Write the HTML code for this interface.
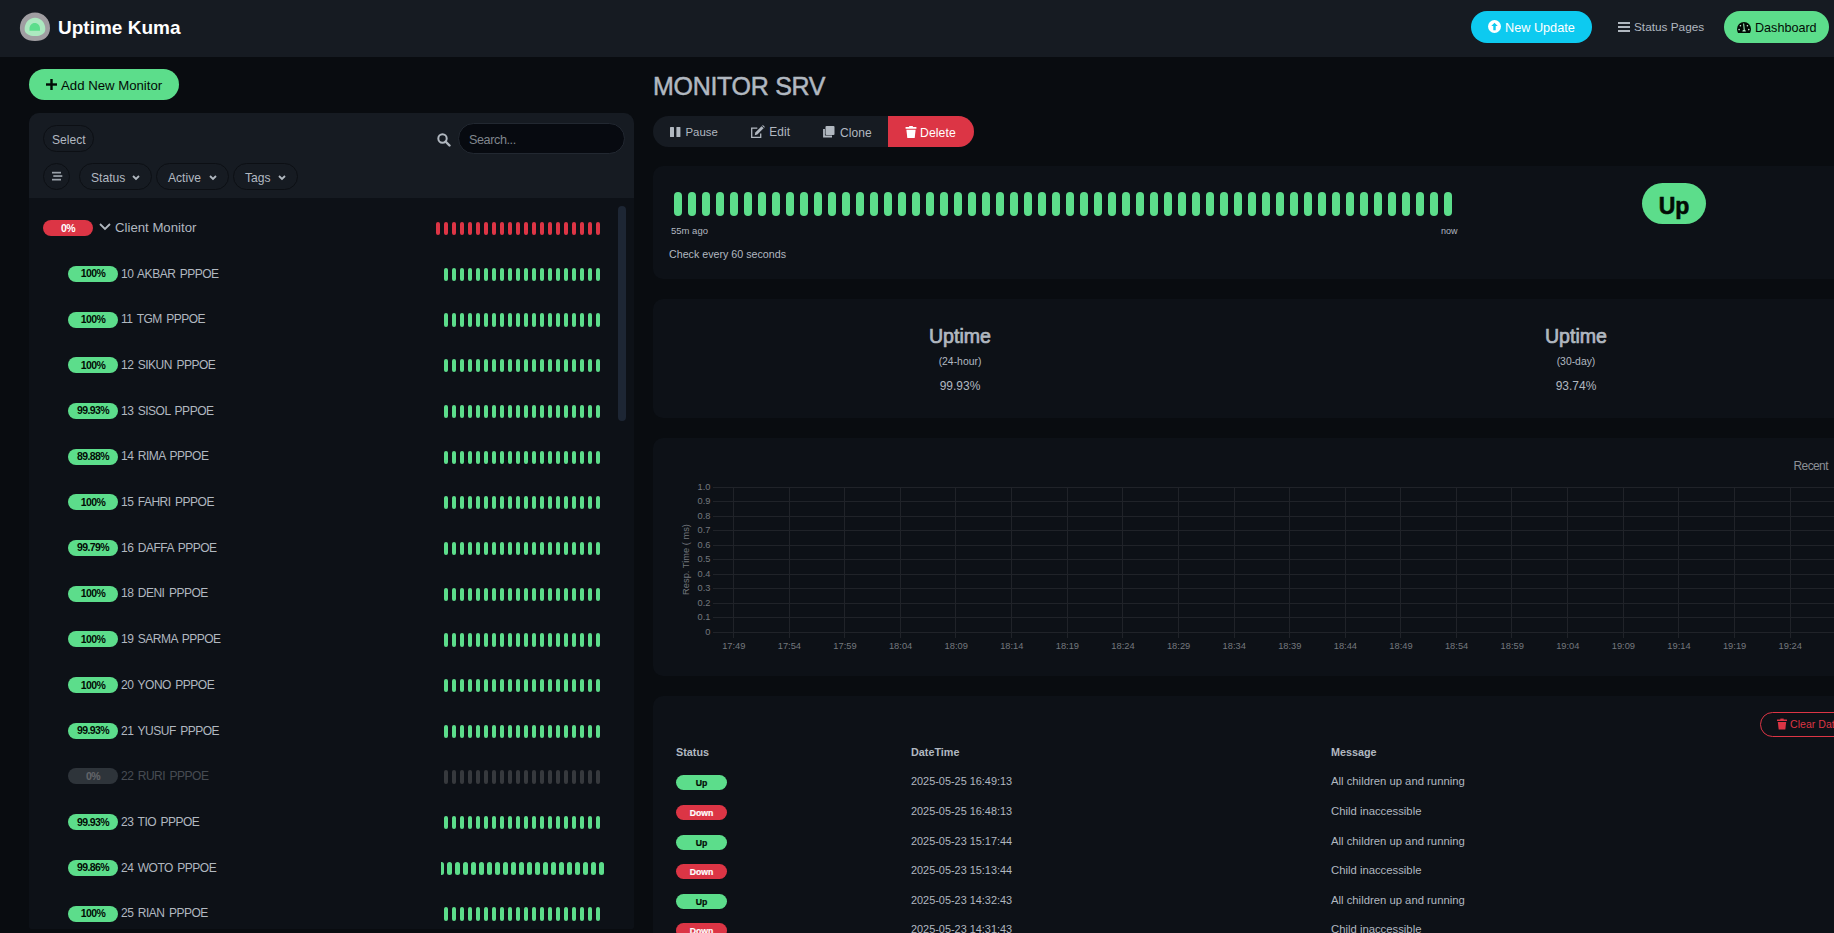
<!DOCTYPE html><html><head><meta charset="utf-8"><title>Uptime Kuma</title><style>
*{box-sizing:border-box}
html,body{margin:0;padding:0}
body{width:1834px;height:933px;overflow:hidden;position:relative;background:#090c10;font-family:"Liberation Sans",sans-serif;color:#b1b8c0}
.a{position:absolute}
.hdr{left:0;top:0;width:1834px;height:57px;background:#161b22}
.t{position:absolute;white-space:nowrap;line-height:1}
.bt i{position:absolute;border-radius:5px;display:block}
.pill{position:absolute;border-radius:999px}
</style></head><body>
<div class="a hdr"></div>
<svg class="a" style="left:15px;top:8px" width="40" height="38" viewBox="0 0 40 38"><path d="M20 4.5C28.5 4.5 35 11 35 20C35 28.5 29 33 20 33C11 33 4.9 28.5 4.9 20C4.9 11 11.5 4.5 20 4.5Z" fill="#a09ea2"/><path d="M20 9.8C26 9.8 30.3 15 30.3 21C30.3 25.8 26 28.1 20 28.1C14 28.1 9.6 25.8 9.6 21C9.6 15 14 9.8 20 9.8Z" fill="#ace9c0"/><path d="M19.75 14.9C23 14.9 25 17.5 25 20.5L25 22.8L14.5 22.8L14.5 20.5C14.5 17.5 16.5 14.9 19.75 14.9Z" fill="#5cdd8b"/></svg>
<div class="t" style="left:58px;top:18.2px;font-size:19px;font-weight:bold;color:#fff">Uptime Kuma</div>
<div class="pill" style="left:1471px;top:11px;width:121px;height:32px;background:#0dcaf0"></div>
<svg class="a" style="left:1488px;top:20px" width="13" height="13" viewBox="0 0 16 16"><circle cx="8" cy="8" r="8" fill="#fff"/><path d="M8 3.5L4 7.5H6.5V12.5H9.5V7.5H12Z" fill="#0dcaf0"/></svg>
<div class="t" style="left:1505px;top:22px;font-size:12.7px;color:#fff">New Update</div>
<svg class="a" style="left:1618px;top:21px" width="12" height="12" viewBox="0 0 12 12"><rect x="0" y="1" width="12" height="2" fill="#b1b8c0"/><rect x="0" y="5" width="12" height="2" fill="#b1b8c0"/><rect x="0" y="9" width="12" height="2" fill="#b1b8c0"/></svg>
<div class="t" style="left:1634px;top:22px;font-size:11.8px;color:#b1b8c0">Status Pages</div>
<div class="pill" style="left:1724px;top:11px;width:105px;height:32px;background:#5cdd8b"></div>
<svg class="a" style="left:1737px;top:22px" width="14" height="11" viewBox="0 0 14 11"><path d="M7 0A7 7 0 0 1 14 7Q14 9.5 13 11H1Q0 9.5 0 7A7 7 0 0 1 7 0Z" fill="#020b05"/><circle cx="3.4" cy="3.8" r="0.8" fill="#cfeedd"/><circle cx="10.4" cy="3.8" r="0.8" fill="#cfeedd"/><circle cx="2.1" cy="7.6" r="0.8" fill="#cfeedd"/><circle cx="11.8" cy="7.6" r="0.8" fill="#cfeedd"/><path d="M6.6 1.5L7.3 8" stroke="#8fe3b0" stroke-width="1.1"/><path d="M5.3 9.5A1.8 1.8 0 0 1 8.9 9.5Z" fill="#b0ecc8"/></svg>
<div class="t" style="left:1755px;top:21.5px;font-size:12.6px;color:#020b05">Dashboard</div>
<div class="pill" style="left:29px;top:69px;width:150px;height:31px;background:#5cdd8b"></div>
<svg class="a" style="left:46px;top:79px" width="11" height="11" viewBox="0 0 11 11"><rect x="4.3" y="0" width="2.4" height="11" fill="#020b05"/><rect x="0" y="4.3" width="11" height="2.4" fill="#020b05"/></svg>
<div class="t" style="left:61px;top:79px;font-size:13.2px;color:#020b05">Add New Monitor</div>
<div class="a" style="left:29px;top:113px;width:605px;height:816px;background:#0d1117;border-radius:10px 10px 2px 2px"></div>
<div class="a" style="left:29px;top:113px;width:605px;height:85px;background:#161b22;border-radius:10px 10px 0 0"></div>
<div class="pill" style="left:43px;top:125px;width:51px;height:27px;border:1.5px solid #0c0f14;background:#161b22"></div>
<div class="t" style="left:52px;top:133.5px;font-size:12.1px;color:#b1b8c0">Select</div>
<svg class="a" style="left:437px;top:133px" width="14" height="14" viewBox="0 0 14 14"><circle cx="5.5" cy="5.5" r="4.2" fill="none" stroke="#b1b8c0" stroke-width="2"/><path d="M8.5 8.5L12.5 12.5" stroke="#b1b8c0" stroke-width="2.4" stroke-linecap="round"/></svg>
<div class="pill" style="left:457.5px;top:123px;width:167.5px;height:31px;background:#070a10;border:1px solid #222831"></div>
<div class="t" style="left:469px;top:134.2px;font-size:12.6px;letter-spacing:-0.4px;color:#80868d">Search...</div>
<div class="pill" style="left:43px;top:163px;width:27px;height:27px;border:1.5px solid #0c0f14"></div>
<svg class="a" style="left:52px;top:171px" width="11" height="11" viewBox="0 0 11 11"><rect x="0" y="0.8" width="9" height="1.7" fill="#9aa1a9"/><rect x="1.3" y="4.2" width="9" height="1.7" fill="#9aa1a9"/><rect x="0" y="7.8" width="9" height="1.7" fill="#9aa1a9"/></svg>
<div class="pill" style="left:79px;top:163px;width:73px;height:27px;border:1.5px solid #0c0f14"></div>
<div class="t" style="left:91px;top:172px;font-size:12.1px;color:#b1b8c0">Status</div>
<svg class="a" style="left:132px;top:174.7px" width="8" height="6" viewBox="0 0 8 6"><path d="M1 1L4 4L7 1" fill="none" stroke="#b1b8c0" stroke-width="1.8"/></svg>
<div class="pill" style="left:156px;top:163px;width:73px;height:27px;border:1.5px solid #0c0f14"></div>
<div class="t" style="left:168px;top:172px;font-size:12.1px;color:#b1b8c0">Active</div>
<svg class="a" style="left:209px;top:174.7px" width="8" height="6" viewBox="0 0 8 6"><path d="M1 1L4 4L7 1" fill="none" stroke="#b1b8c0" stroke-width="1.8"/></svg>
<div class="pill" style="left:233px;top:163px;width:65px;height:27px;border:1.5px solid #0c0f14"></div>
<div class="t" style="left:245px;top:172px;font-size:12.1px;color:#b1b8c0">Tags</div>
<svg class="a" style="left:278px;top:174.7px" width="8" height="6" viewBox="0 0 8 6"><path d="M1 1L4 4L7 1" fill="none" stroke="#b1b8c0" stroke-width="1.8"/></svg>
<div class="a" style="left:618px;top:206px;width:8px;height:215px;background:#1d2634;border-radius:4px"></div>
<div class="pill" style="left:43px;top:220px;width:50px;height:16px;background:#dc3545"></div>
<div class="t" style="left:43px;top:223.2px;width:50px;text-align:center;font-size:10.5px;letter-spacing:-0.6px;font-weight:bold;color:#fff">0%</div>
<svg class="a" style="left:99px;top:223px" width="12" height="8" viewBox="0 0 12 8"><path d="M1 1L6 6L11 1" fill="none" stroke="#b1b8c0" stroke-width="1.8"/></svg>
<div class="t" style="left:115px;top:221px;font-size:13.2px;color:#b1b8c0">Client Monitor</div>
<div class="bt"><i style="left:435.90px;top:221.85px;width:4.6px;height:13.3px;background:#dc3545"></i><i style="left:443.90px;top:221.85px;width:4.6px;height:13.3px;background:#dc3545"></i><i style="left:451.90px;top:221.85px;width:4.6px;height:13.3px;background:#dc3545"></i><i style="left:459.90px;top:221.85px;width:4.6px;height:13.3px;background:#dc3545"></i><i style="left:467.90px;top:221.85px;width:4.6px;height:13.3px;background:#dc3545"></i><i style="left:475.90px;top:221.85px;width:4.6px;height:13.3px;background:#dc3545"></i><i style="left:483.90px;top:221.85px;width:4.6px;height:13.3px;background:#dc3545"></i><i style="left:491.90px;top:221.85px;width:4.6px;height:13.3px;background:#dc3545"></i><i style="left:499.90px;top:221.85px;width:4.6px;height:13.3px;background:#dc3545"></i><i style="left:507.90px;top:221.85px;width:4.6px;height:13.3px;background:#dc3545"></i><i style="left:515.90px;top:221.85px;width:4.6px;height:13.3px;background:#dc3545"></i><i style="left:523.90px;top:221.85px;width:4.6px;height:13.3px;background:#dc3545"></i><i style="left:531.90px;top:221.85px;width:4.6px;height:13.3px;background:#dc3545"></i><i style="left:539.90px;top:221.85px;width:4.6px;height:13.3px;background:#dc3545"></i><i style="left:547.90px;top:221.85px;width:4.6px;height:13.3px;background:#dc3545"></i><i style="left:555.90px;top:221.85px;width:4.6px;height:13.3px;background:#dc3545"></i><i style="left:563.90px;top:221.85px;width:4.6px;height:13.3px;background:#dc3545"></i><i style="left:571.90px;top:221.85px;width:4.6px;height:13.3px;background:#dc3545"></i><i style="left:579.90px;top:221.85px;width:4.6px;height:13.3px;background:#dc3545"></i><i style="left:587.90px;top:221.85px;width:4.6px;height:13.3px;background:#dc3545"></i><i style="left:595.90px;top:221.85px;width:4.6px;height:13.3px;background:#dc3545"></i></div>
<div>
<div class="pill" style="left:68px;top:265.90px;width:50px;height:16px;background:#5cdd8b"></div>
<div class="t" style="left:68px;top:268.30px;width:50px;text-align:center;font-size:10.5px;letter-spacing:-0.6px;font-weight:bold;color:#020b05">100%</div>
<div class="t" style="left:121px;top:267.60px;font-size:12px;letter-spacing:-0.5px;word-spacing:1.6px;color:#b1b8c0">10 AKBAR PPPOE</div>
<div class="bt"><i style="left:443.90px;top:267.75px;width:4.6px;height:13.3px;background:#5cdd8b"></i><i style="left:451.90px;top:267.75px;width:4.6px;height:13.3px;background:#5cdd8b"></i><i style="left:459.90px;top:267.75px;width:4.6px;height:13.3px;background:#5cdd8b"></i><i style="left:467.90px;top:267.75px;width:4.6px;height:13.3px;background:#5cdd8b"></i><i style="left:475.90px;top:267.75px;width:4.6px;height:13.3px;background:#5cdd8b"></i><i style="left:483.90px;top:267.75px;width:4.6px;height:13.3px;background:#5cdd8b"></i><i style="left:491.90px;top:267.75px;width:4.6px;height:13.3px;background:#5cdd8b"></i><i style="left:499.90px;top:267.75px;width:4.6px;height:13.3px;background:#5cdd8b"></i><i style="left:507.90px;top:267.75px;width:4.6px;height:13.3px;background:#5cdd8b"></i><i style="left:515.90px;top:267.75px;width:4.6px;height:13.3px;background:#5cdd8b"></i><i style="left:523.90px;top:267.75px;width:4.6px;height:13.3px;background:#5cdd8b"></i><i style="left:531.90px;top:267.75px;width:4.6px;height:13.3px;background:#5cdd8b"></i><i style="left:539.90px;top:267.75px;width:4.6px;height:13.3px;background:#5cdd8b"></i><i style="left:547.90px;top:267.75px;width:4.6px;height:13.3px;background:#5cdd8b"></i><i style="left:555.90px;top:267.75px;width:4.6px;height:13.3px;background:#5cdd8b"></i><i style="left:563.90px;top:267.75px;width:4.6px;height:13.3px;background:#5cdd8b"></i><i style="left:571.90px;top:267.75px;width:4.6px;height:13.3px;background:#5cdd8b"></i><i style="left:579.90px;top:267.75px;width:4.6px;height:13.3px;background:#5cdd8b"></i><i style="left:587.90px;top:267.75px;width:4.6px;height:13.3px;background:#5cdd8b"></i><i style="left:595.90px;top:267.75px;width:4.6px;height:13.3px;background:#5cdd8b"></i></div>
</div>
<div>
<div class="pill" style="left:68px;top:311.59px;width:50px;height:16px;background:#5cdd8b"></div>
<div class="t" style="left:68px;top:313.99px;width:50px;text-align:center;font-size:10.5px;letter-spacing:-0.6px;font-weight:bold;color:#020b05">100%</div>
<div class="t" style="left:121px;top:313.29px;font-size:12px;letter-spacing:-0.5px;word-spacing:1.6px;color:#b1b8c0">11 TGM PPPOE</div>
<div class="bt"><i style="left:443.90px;top:313.44px;width:4.6px;height:13.3px;background:#5cdd8b"></i><i style="left:451.90px;top:313.44px;width:4.6px;height:13.3px;background:#5cdd8b"></i><i style="left:459.90px;top:313.44px;width:4.6px;height:13.3px;background:#5cdd8b"></i><i style="left:467.90px;top:313.44px;width:4.6px;height:13.3px;background:#5cdd8b"></i><i style="left:475.90px;top:313.44px;width:4.6px;height:13.3px;background:#5cdd8b"></i><i style="left:483.90px;top:313.44px;width:4.6px;height:13.3px;background:#5cdd8b"></i><i style="left:491.90px;top:313.44px;width:4.6px;height:13.3px;background:#5cdd8b"></i><i style="left:499.90px;top:313.44px;width:4.6px;height:13.3px;background:#5cdd8b"></i><i style="left:507.90px;top:313.44px;width:4.6px;height:13.3px;background:#5cdd8b"></i><i style="left:515.90px;top:313.44px;width:4.6px;height:13.3px;background:#5cdd8b"></i><i style="left:523.90px;top:313.44px;width:4.6px;height:13.3px;background:#5cdd8b"></i><i style="left:531.90px;top:313.44px;width:4.6px;height:13.3px;background:#5cdd8b"></i><i style="left:539.90px;top:313.44px;width:4.6px;height:13.3px;background:#5cdd8b"></i><i style="left:547.90px;top:313.44px;width:4.6px;height:13.3px;background:#5cdd8b"></i><i style="left:555.90px;top:313.44px;width:4.6px;height:13.3px;background:#5cdd8b"></i><i style="left:563.90px;top:313.44px;width:4.6px;height:13.3px;background:#5cdd8b"></i><i style="left:571.90px;top:313.44px;width:4.6px;height:13.3px;background:#5cdd8b"></i><i style="left:579.90px;top:313.44px;width:4.6px;height:13.3px;background:#5cdd8b"></i><i style="left:587.90px;top:313.44px;width:4.6px;height:13.3px;background:#5cdd8b"></i><i style="left:595.90px;top:313.44px;width:4.6px;height:13.3px;background:#5cdd8b"></i></div>
</div>
<div>
<div class="pill" style="left:68px;top:357.28px;width:50px;height:16px;background:#5cdd8b"></div>
<div class="t" style="left:68px;top:359.68px;width:50px;text-align:center;font-size:10.5px;letter-spacing:-0.6px;font-weight:bold;color:#020b05">100%</div>
<div class="t" style="left:121px;top:358.98px;font-size:12px;letter-spacing:-0.5px;word-spacing:1.6px;color:#b1b8c0">12 SIKUN PPPOE</div>
<div class="bt"><i style="left:443.90px;top:359.13px;width:4.6px;height:13.3px;background:#5cdd8b"></i><i style="left:451.90px;top:359.13px;width:4.6px;height:13.3px;background:#5cdd8b"></i><i style="left:459.90px;top:359.13px;width:4.6px;height:13.3px;background:#5cdd8b"></i><i style="left:467.90px;top:359.13px;width:4.6px;height:13.3px;background:#5cdd8b"></i><i style="left:475.90px;top:359.13px;width:4.6px;height:13.3px;background:#5cdd8b"></i><i style="left:483.90px;top:359.13px;width:4.6px;height:13.3px;background:#5cdd8b"></i><i style="left:491.90px;top:359.13px;width:4.6px;height:13.3px;background:#5cdd8b"></i><i style="left:499.90px;top:359.13px;width:4.6px;height:13.3px;background:#5cdd8b"></i><i style="left:507.90px;top:359.13px;width:4.6px;height:13.3px;background:#5cdd8b"></i><i style="left:515.90px;top:359.13px;width:4.6px;height:13.3px;background:#5cdd8b"></i><i style="left:523.90px;top:359.13px;width:4.6px;height:13.3px;background:#5cdd8b"></i><i style="left:531.90px;top:359.13px;width:4.6px;height:13.3px;background:#5cdd8b"></i><i style="left:539.90px;top:359.13px;width:4.6px;height:13.3px;background:#5cdd8b"></i><i style="left:547.90px;top:359.13px;width:4.6px;height:13.3px;background:#5cdd8b"></i><i style="left:555.90px;top:359.13px;width:4.6px;height:13.3px;background:#5cdd8b"></i><i style="left:563.90px;top:359.13px;width:4.6px;height:13.3px;background:#5cdd8b"></i><i style="left:571.90px;top:359.13px;width:4.6px;height:13.3px;background:#5cdd8b"></i><i style="left:579.90px;top:359.13px;width:4.6px;height:13.3px;background:#5cdd8b"></i><i style="left:587.90px;top:359.13px;width:4.6px;height:13.3px;background:#5cdd8b"></i><i style="left:595.90px;top:359.13px;width:4.6px;height:13.3px;background:#5cdd8b"></i></div>
</div>
<div>
<div class="pill" style="left:68px;top:402.97px;width:50px;height:16px;background:#5cdd8b"></div>
<div class="t" style="left:68px;top:405.37px;width:50px;text-align:center;font-size:10.5px;letter-spacing:-0.6px;font-weight:bold;color:#020b05">99.93%</div>
<div class="t" style="left:121px;top:404.67px;font-size:12px;letter-spacing:-0.5px;word-spacing:1.6px;color:#b1b8c0">13 SISOL PPPOE</div>
<div class="bt"><i style="left:443.90px;top:404.82px;width:4.6px;height:13.3px;background:#5cdd8b"></i><i style="left:451.90px;top:404.82px;width:4.6px;height:13.3px;background:#5cdd8b"></i><i style="left:459.90px;top:404.82px;width:4.6px;height:13.3px;background:#5cdd8b"></i><i style="left:467.90px;top:404.82px;width:4.6px;height:13.3px;background:#5cdd8b"></i><i style="left:475.90px;top:404.82px;width:4.6px;height:13.3px;background:#5cdd8b"></i><i style="left:483.90px;top:404.82px;width:4.6px;height:13.3px;background:#5cdd8b"></i><i style="left:491.90px;top:404.82px;width:4.6px;height:13.3px;background:#5cdd8b"></i><i style="left:499.90px;top:404.82px;width:4.6px;height:13.3px;background:#5cdd8b"></i><i style="left:507.90px;top:404.82px;width:4.6px;height:13.3px;background:#5cdd8b"></i><i style="left:515.90px;top:404.82px;width:4.6px;height:13.3px;background:#5cdd8b"></i><i style="left:523.90px;top:404.82px;width:4.6px;height:13.3px;background:#5cdd8b"></i><i style="left:531.90px;top:404.82px;width:4.6px;height:13.3px;background:#5cdd8b"></i><i style="left:539.90px;top:404.82px;width:4.6px;height:13.3px;background:#5cdd8b"></i><i style="left:547.90px;top:404.82px;width:4.6px;height:13.3px;background:#5cdd8b"></i><i style="left:555.90px;top:404.82px;width:4.6px;height:13.3px;background:#5cdd8b"></i><i style="left:563.90px;top:404.82px;width:4.6px;height:13.3px;background:#5cdd8b"></i><i style="left:571.90px;top:404.82px;width:4.6px;height:13.3px;background:#5cdd8b"></i><i style="left:579.90px;top:404.82px;width:4.6px;height:13.3px;background:#5cdd8b"></i><i style="left:587.90px;top:404.82px;width:4.6px;height:13.3px;background:#5cdd8b"></i><i style="left:595.90px;top:404.82px;width:4.6px;height:13.3px;background:#5cdd8b"></i></div>
</div>
<div>
<div class="pill" style="left:68px;top:448.66px;width:50px;height:16px;background:#5cdd8b"></div>
<div class="t" style="left:68px;top:451.06px;width:50px;text-align:center;font-size:10.5px;letter-spacing:-0.6px;font-weight:bold;color:#020b05">89.88%</div>
<div class="t" style="left:121px;top:450.36px;font-size:12px;letter-spacing:-0.5px;word-spacing:1.6px;color:#b1b8c0">14 RIMA PPPOE</div>
<div class="bt"><i style="left:443.90px;top:450.51px;width:4.6px;height:13.3px;background:#5cdd8b"></i><i style="left:451.90px;top:450.51px;width:4.6px;height:13.3px;background:#5cdd8b"></i><i style="left:459.90px;top:450.51px;width:4.6px;height:13.3px;background:#5cdd8b"></i><i style="left:467.90px;top:450.51px;width:4.6px;height:13.3px;background:#5cdd8b"></i><i style="left:475.90px;top:450.51px;width:4.6px;height:13.3px;background:#5cdd8b"></i><i style="left:483.90px;top:450.51px;width:4.6px;height:13.3px;background:#5cdd8b"></i><i style="left:491.90px;top:450.51px;width:4.6px;height:13.3px;background:#5cdd8b"></i><i style="left:499.90px;top:450.51px;width:4.6px;height:13.3px;background:#5cdd8b"></i><i style="left:507.90px;top:450.51px;width:4.6px;height:13.3px;background:#5cdd8b"></i><i style="left:515.90px;top:450.51px;width:4.6px;height:13.3px;background:#5cdd8b"></i><i style="left:523.90px;top:450.51px;width:4.6px;height:13.3px;background:#5cdd8b"></i><i style="left:531.90px;top:450.51px;width:4.6px;height:13.3px;background:#5cdd8b"></i><i style="left:539.90px;top:450.51px;width:4.6px;height:13.3px;background:#5cdd8b"></i><i style="left:547.90px;top:450.51px;width:4.6px;height:13.3px;background:#5cdd8b"></i><i style="left:555.90px;top:450.51px;width:4.6px;height:13.3px;background:#5cdd8b"></i><i style="left:563.90px;top:450.51px;width:4.6px;height:13.3px;background:#5cdd8b"></i><i style="left:571.90px;top:450.51px;width:4.6px;height:13.3px;background:#5cdd8b"></i><i style="left:579.90px;top:450.51px;width:4.6px;height:13.3px;background:#5cdd8b"></i><i style="left:587.90px;top:450.51px;width:4.6px;height:13.3px;background:#5cdd8b"></i><i style="left:595.90px;top:450.51px;width:4.6px;height:13.3px;background:#5cdd8b"></i></div>
</div>
<div>
<div class="pill" style="left:68px;top:494.35px;width:50px;height:16px;background:#5cdd8b"></div>
<div class="t" style="left:68px;top:496.75px;width:50px;text-align:center;font-size:10.5px;letter-spacing:-0.6px;font-weight:bold;color:#020b05">100%</div>
<div class="t" style="left:121px;top:496.05px;font-size:12px;letter-spacing:-0.5px;word-spacing:1.6px;color:#b1b8c0">15 FAHRI PPPOE</div>
<div class="bt"><i style="left:443.90px;top:496.20px;width:4.6px;height:13.3px;background:#5cdd8b"></i><i style="left:451.90px;top:496.20px;width:4.6px;height:13.3px;background:#5cdd8b"></i><i style="left:459.90px;top:496.20px;width:4.6px;height:13.3px;background:#5cdd8b"></i><i style="left:467.90px;top:496.20px;width:4.6px;height:13.3px;background:#5cdd8b"></i><i style="left:475.90px;top:496.20px;width:4.6px;height:13.3px;background:#5cdd8b"></i><i style="left:483.90px;top:496.20px;width:4.6px;height:13.3px;background:#5cdd8b"></i><i style="left:491.90px;top:496.20px;width:4.6px;height:13.3px;background:#5cdd8b"></i><i style="left:499.90px;top:496.20px;width:4.6px;height:13.3px;background:#5cdd8b"></i><i style="left:507.90px;top:496.20px;width:4.6px;height:13.3px;background:#5cdd8b"></i><i style="left:515.90px;top:496.20px;width:4.6px;height:13.3px;background:#5cdd8b"></i><i style="left:523.90px;top:496.20px;width:4.6px;height:13.3px;background:#5cdd8b"></i><i style="left:531.90px;top:496.20px;width:4.6px;height:13.3px;background:#5cdd8b"></i><i style="left:539.90px;top:496.20px;width:4.6px;height:13.3px;background:#5cdd8b"></i><i style="left:547.90px;top:496.20px;width:4.6px;height:13.3px;background:#5cdd8b"></i><i style="left:555.90px;top:496.20px;width:4.6px;height:13.3px;background:#5cdd8b"></i><i style="left:563.90px;top:496.20px;width:4.6px;height:13.3px;background:#5cdd8b"></i><i style="left:571.90px;top:496.20px;width:4.6px;height:13.3px;background:#5cdd8b"></i><i style="left:579.90px;top:496.20px;width:4.6px;height:13.3px;background:#5cdd8b"></i><i style="left:587.90px;top:496.20px;width:4.6px;height:13.3px;background:#5cdd8b"></i><i style="left:595.90px;top:496.20px;width:4.6px;height:13.3px;background:#5cdd8b"></i></div>
</div>
<div>
<div class="pill" style="left:68px;top:540.04px;width:50px;height:16px;background:#5cdd8b"></div>
<div class="t" style="left:68px;top:542.44px;width:50px;text-align:center;font-size:10.5px;letter-spacing:-0.6px;font-weight:bold;color:#020b05">99.79%</div>
<div class="t" style="left:121px;top:541.74px;font-size:12px;letter-spacing:-0.5px;word-spacing:1.6px;color:#b1b8c0">16 DAFFA PPPOE</div>
<div class="bt"><i style="left:443.90px;top:541.89px;width:4.6px;height:13.3px;background:#5cdd8b"></i><i style="left:451.90px;top:541.89px;width:4.6px;height:13.3px;background:#5cdd8b"></i><i style="left:459.90px;top:541.89px;width:4.6px;height:13.3px;background:#5cdd8b"></i><i style="left:467.90px;top:541.89px;width:4.6px;height:13.3px;background:#5cdd8b"></i><i style="left:475.90px;top:541.89px;width:4.6px;height:13.3px;background:#5cdd8b"></i><i style="left:483.90px;top:541.89px;width:4.6px;height:13.3px;background:#5cdd8b"></i><i style="left:491.90px;top:541.89px;width:4.6px;height:13.3px;background:#5cdd8b"></i><i style="left:499.90px;top:541.89px;width:4.6px;height:13.3px;background:#5cdd8b"></i><i style="left:507.90px;top:541.89px;width:4.6px;height:13.3px;background:#5cdd8b"></i><i style="left:515.90px;top:541.89px;width:4.6px;height:13.3px;background:#5cdd8b"></i><i style="left:523.90px;top:541.89px;width:4.6px;height:13.3px;background:#5cdd8b"></i><i style="left:531.90px;top:541.89px;width:4.6px;height:13.3px;background:#5cdd8b"></i><i style="left:539.90px;top:541.89px;width:4.6px;height:13.3px;background:#5cdd8b"></i><i style="left:547.90px;top:541.89px;width:4.6px;height:13.3px;background:#5cdd8b"></i><i style="left:555.90px;top:541.89px;width:4.6px;height:13.3px;background:#5cdd8b"></i><i style="left:563.90px;top:541.89px;width:4.6px;height:13.3px;background:#5cdd8b"></i><i style="left:571.90px;top:541.89px;width:4.6px;height:13.3px;background:#5cdd8b"></i><i style="left:579.90px;top:541.89px;width:4.6px;height:13.3px;background:#5cdd8b"></i><i style="left:587.90px;top:541.89px;width:4.6px;height:13.3px;background:#5cdd8b"></i><i style="left:595.90px;top:541.89px;width:4.6px;height:13.3px;background:#5cdd8b"></i></div>
</div>
<div>
<div class="pill" style="left:68px;top:585.73px;width:50px;height:16px;background:#5cdd8b"></div>
<div class="t" style="left:68px;top:588.13px;width:50px;text-align:center;font-size:10.5px;letter-spacing:-0.6px;font-weight:bold;color:#020b05">100%</div>
<div class="t" style="left:121px;top:587.43px;font-size:12px;letter-spacing:-0.5px;word-spacing:1.6px;color:#b1b8c0">18 DENI PPPOE</div>
<div class="bt"><i style="left:443.90px;top:587.58px;width:4.6px;height:13.3px;background:#5cdd8b"></i><i style="left:451.90px;top:587.58px;width:4.6px;height:13.3px;background:#5cdd8b"></i><i style="left:459.90px;top:587.58px;width:4.6px;height:13.3px;background:#5cdd8b"></i><i style="left:467.90px;top:587.58px;width:4.6px;height:13.3px;background:#5cdd8b"></i><i style="left:475.90px;top:587.58px;width:4.6px;height:13.3px;background:#5cdd8b"></i><i style="left:483.90px;top:587.58px;width:4.6px;height:13.3px;background:#5cdd8b"></i><i style="left:491.90px;top:587.58px;width:4.6px;height:13.3px;background:#5cdd8b"></i><i style="left:499.90px;top:587.58px;width:4.6px;height:13.3px;background:#5cdd8b"></i><i style="left:507.90px;top:587.58px;width:4.6px;height:13.3px;background:#5cdd8b"></i><i style="left:515.90px;top:587.58px;width:4.6px;height:13.3px;background:#5cdd8b"></i><i style="left:523.90px;top:587.58px;width:4.6px;height:13.3px;background:#5cdd8b"></i><i style="left:531.90px;top:587.58px;width:4.6px;height:13.3px;background:#5cdd8b"></i><i style="left:539.90px;top:587.58px;width:4.6px;height:13.3px;background:#5cdd8b"></i><i style="left:547.90px;top:587.58px;width:4.6px;height:13.3px;background:#5cdd8b"></i><i style="left:555.90px;top:587.58px;width:4.6px;height:13.3px;background:#5cdd8b"></i><i style="left:563.90px;top:587.58px;width:4.6px;height:13.3px;background:#5cdd8b"></i><i style="left:571.90px;top:587.58px;width:4.6px;height:13.3px;background:#5cdd8b"></i><i style="left:579.90px;top:587.58px;width:4.6px;height:13.3px;background:#5cdd8b"></i><i style="left:587.90px;top:587.58px;width:4.6px;height:13.3px;background:#5cdd8b"></i><i style="left:595.90px;top:587.58px;width:4.6px;height:13.3px;background:#5cdd8b"></i></div>
</div>
<div>
<div class="pill" style="left:68px;top:631.42px;width:50px;height:16px;background:#5cdd8b"></div>
<div class="t" style="left:68px;top:633.82px;width:50px;text-align:center;font-size:10.5px;letter-spacing:-0.6px;font-weight:bold;color:#020b05">100%</div>
<div class="t" style="left:121px;top:633.12px;font-size:12px;letter-spacing:-0.5px;word-spacing:1.6px;color:#b1b8c0">19 SARMA PPPOE</div>
<div class="bt"><i style="left:443.90px;top:633.27px;width:4.6px;height:13.3px;background:#5cdd8b"></i><i style="left:451.90px;top:633.27px;width:4.6px;height:13.3px;background:#5cdd8b"></i><i style="left:459.90px;top:633.27px;width:4.6px;height:13.3px;background:#5cdd8b"></i><i style="left:467.90px;top:633.27px;width:4.6px;height:13.3px;background:#5cdd8b"></i><i style="left:475.90px;top:633.27px;width:4.6px;height:13.3px;background:#5cdd8b"></i><i style="left:483.90px;top:633.27px;width:4.6px;height:13.3px;background:#5cdd8b"></i><i style="left:491.90px;top:633.27px;width:4.6px;height:13.3px;background:#5cdd8b"></i><i style="left:499.90px;top:633.27px;width:4.6px;height:13.3px;background:#5cdd8b"></i><i style="left:507.90px;top:633.27px;width:4.6px;height:13.3px;background:#5cdd8b"></i><i style="left:515.90px;top:633.27px;width:4.6px;height:13.3px;background:#5cdd8b"></i><i style="left:523.90px;top:633.27px;width:4.6px;height:13.3px;background:#5cdd8b"></i><i style="left:531.90px;top:633.27px;width:4.6px;height:13.3px;background:#5cdd8b"></i><i style="left:539.90px;top:633.27px;width:4.6px;height:13.3px;background:#5cdd8b"></i><i style="left:547.90px;top:633.27px;width:4.6px;height:13.3px;background:#5cdd8b"></i><i style="left:555.90px;top:633.27px;width:4.6px;height:13.3px;background:#5cdd8b"></i><i style="left:563.90px;top:633.27px;width:4.6px;height:13.3px;background:#5cdd8b"></i><i style="left:571.90px;top:633.27px;width:4.6px;height:13.3px;background:#5cdd8b"></i><i style="left:579.90px;top:633.27px;width:4.6px;height:13.3px;background:#5cdd8b"></i><i style="left:587.90px;top:633.27px;width:4.6px;height:13.3px;background:#5cdd8b"></i><i style="left:595.90px;top:633.27px;width:4.6px;height:13.3px;background:#5cdd8b"></i></div>
</div>
<div>
<div class="pill" style="left:68px;top:677.11px;width:50px;height:16px;background:#5cdd8b"></div>
<div class="t" style="left:68px;top:679.51px;width:50px;text-align:center;font-size:10.5px;letter-spacing:-0.6px;font-weight:bold;color:#020b05">100%</div>
<div class="t" style="left:121px;top:678.81px;font-size:12px;letter-spacing:-0.5px;word-spacing:1.6px;color:#b1b8c0">20 YONO PPPOE</div>
<div class="bt"><i style="left:443.90px;top:678.96px;width:4.6px;height:13.3px;background:#5cdd8b"></i><i style="left:451.90px;top:678.96px;width:4.6px;height:13.3px;background:#5cdd8b"></i><i style="left:459.90px;top:678.96px;width:4.6px;height:13.3px;background:#5cdd8b"></i><i style="left:467.90px;top:678.96px;width:4.6px;height:13.3px;background:#5cdd8b"></i><i style="left:475.90px;top:678.96px;width:4.6px;height:13.3px;background:#5cdd8b"></i><i style="left:483.90px;top:678.96px;width:4.6px;height:13.3px;background:#5cdd8b"></i><i style="left:491.90px;top:678.96px;width:4.6px;height:13.3px;background:#5cdd8b"></i><i style="left:499.90px;top:678.96px;width:4.6px;height:13.3px;background:#5cdd8b"></i><i style="left:507.90px;top:678.96px;width:4.6px;height:13.3px;background:#5cdd8b"></i><i style="left:515.90px;top:678.96px;width:4.6px;height:13.3px;background:#5cdd8b"></i><i style="left:523.90px;top:678.96px;width:4.6px;height:13.3px;background:#5cdd8b"></i><i style="left:531.90px;top:678.96px;width:4.6px;height:13.3px;background:#5cdd8b"></i><i style="left:539.90px;top:678.96px;width:4.6px;height:13.3px;background:#5cdd8b"></i><i style="left:547.90px;top:678.96px;width:4.6px;height:13.3px;background:#5cdd8b"></i><i style="left:555.90px;top:678.96px;width:4.6px;height:13.3px;background:#5cdd8b"></i><i style="left:563.90px;top:678.96px;width:4.6px;height:13.3px;background:#5cdd8b"></i><i style="left:571.90px;top:678.96px;width:4.6px;height:13.3px;background:#5cdd8b"></i><i style="left:579.90px;top:678.96px;width:4.6px;height:13.3px;background:#5cdd8b"></i><i style="left:587.90px;top:678.96px;width:4.6px;height:13.3px;background:#5cdd8b"></i><i style="left:595.90px;top:678.96px;width:4.6px;height:13.3px;background:#5cdd8b"></i></div>
</div>
<div>
<div class="pill" style="left:68px;top:722.80px;width:50px;height:16px;background:#5cdd8b"></div>
<div class="t" style="left:68px;top:725.20px;width:50px;text-align:center;font-size:10.5px;letter-spacing:-0.6px;font-weight:bold;color:#020b05">99.93%</div>
<div class="t" style="left:121px;top:724.50px;font-size:12px;letter-spacing:-0.5px;word-spacing:1.6px;color:#b1b8c0">21 YUSUF PPPOE</div>
<div class="bt"><i style="left:443.90px;top:724.65px;width:4.6px;height:13.3px;background:#5cdd8b"></i><i style="left:451.90px;top:724.65px;width:4.6px;height:13.3px;background:#5cdd8b"></i><i style="left:459.90px;top:724.65px;width:4.6px;height:13.3px;background:#5cdd8b"></i><i style="left:467.90px;top:724.65px;width:4.6px;height:13.3px;background:#5cdd8b"></i><i style="left:475.90px;top:724.65px;width:4.6px;height:13.3px;background:#5cdd8b"></i><i style="left:483.90px;top:724.65px;width:4.6px;height:13.3px;background:#5cdd8b"></i><i style="left:491.90px;top:724.65px;width:4.6px;height:13.3px;background:#5cdd8b"></i><i style="left:499.90px;top:724.65px;width:4.6px;height:13.3px;background:#5cdd8b"></i><i style="left:507.90px;top:724.65px;width:4.6px;height:13.3px;background:#5cdd8b"></i><i style="left:515.90px;top:724.65px;width:4.6px;height:13.3px;background:#5cdd8b"></i><i style="left:523.90px;top:724.65px;width:4.6px;height:13.3px;background:#5cdd8b"></i><i style="left:531.90px;top:724.65px;width:4.6px;height:13.3px;background:#5cdd8b"></i><i style="left:539.90px;top:724.65px;width:4.6px;height:13.3px;background:#5cdd8b"></i><i style="left:547.90px;top:724.65px;width:4.6px;height:13.3px;background:#5cdd8b"></i><i style="left:555.90px;top:724.65px;width:4.6px;height:13.3px;background:#5cdd8b"></i><i style="left:563.90px;top:724.65px;width:4.6px;height:13.3px;background:#5cdd8b"></i><i style="left:571.90px;top:724.65px;width:4.6px;height:13.3px;background:#5cdd8b"></i><i style="left:579.90px;top:724.65px;width:4.6px;height:13.3px;background:#5cdd8b"></i><i style="left:587.90px;top:724.65px;width:4.6px;height:13.3px;background:#5cdd8b"></i><i style="left:595.90px;top:724.65px;width:4.6px;height:13.3px;background:#5cdd8b"></i></div>
</div>
<div class="a" style="left:0;top:0;opacity:0.35">
<div class="pill" style="left:68px;top:768.49px;width:50px;height:16px;background:#6c757d"></div>
<div class="t" style="left:68px;top:770.89px;width:50px;text-align:center;font-size:10.5px;letter-spacing:-0.6px;font-weight:bold;color:#fff">0%</div>
<div class="t" style="left:121px;top:770.19px;font-size:12px;letter-spacing:-0.5px;word-spacing:1.6px;color:#b1b8c0">22 RURI PPPOE</div>
<div class="bt"><i style="left:443.90px;top:770.34px;width:4.6px;height:13.3px;background:#848484"></i><i style="left:451.90px;top:770.34px;width:4.6px;height:13.3px;background:#848484"></i><i style="left:459.90px;top:770.34px;width:4.6px;height:13.3px;background:#848484"></i><i style="left:467.90px;top:770.34px;width:4.6px;height:13.3px;background:#848484"></i><i style="left:475.90px;top:770.34px;width:4.6px;height:13.3px;background:#848484"></i><i style="left:483.90px;top:770.34px;width:4.6px;height:13.3px;background:#848484"></i><i style="left:491.90px;top:770.34px;width:4.6px;height:13.3px;background:#848484"></i><i style="left:499.90px;top:770.34px;width:4.6px;height:13.3px;background:#848484"></i><i style="left:507.90px;top:770.34px;width:4.6px;height:13.3px;background:#848484"></i><i style="left:515.90px;top:770.34px;width:4.6px;height:13.3px;background:#848484"></i><i style="left:523.90px;top:770.34px;width:4.6px;height:13.3px;background:#848484"></i><i style="left:531.90px;top:770.34px;width:4.6px;height:13.3px;background:#848484"></i><i style="left:539.90px;top:770.34px;width:4.6px;height:13.3px;background:#848484"></i><i style="left:547.90px;top:770.34px;width:4.6px;height:13.3px;background:#848484"></i><i style="left:555.90px;top:770.34px;width:4.6px;height:13.3px;background:#848484"></i><i style="left:563.90px;top:770.34px;width:4.6px;height:13.3px;background:#848484"></i><i style="left:571.90px;top:770.34px;width:4.6px;height:13.3px;background:#848484"></i><i style="left:579.90px;top:770.34px;width:4.6px;height:13.3px;background:#848484"></i><i style="left:587.90px;top:770.34px;width:4.6px;height:13.3px;background:#848484"></i><i style="left:595.90px;top:770.34px;width:4.6px;height:13.3px;background:#848484"></i></div>
</div>
<div>
<div class="pill" style="left:68px;top:814.18px;width:50px;height:16px;background:#5cdd8b"></div>
<div class="t" style="left:68px;top:816.58px;width:50px;text-align:center;font-size:10.5px;letter-spacing:-0.6px;font-weight:bold;color:#020b05">99.93%</div>
<div class="t" style="left:121px;top:815.88px;font-size:12px;letter-spacing:-0.5px;word-spacing:1.6px;color:#b1b8c0">23 TIO PPPOE</div>
<div class="bt"><i style="left:443.90px;top:816.03px;width:4.6px;height:13.3px;background:#5cdd8b"></i><i style="left:451.90px;top:816.03px;width:4.6px;height:13.3px;background:#5cdd8b"></i><i style="left:459.90px;top:816.03px;width:4.6px;height:13.3px;background:#5cdd8b"></i><i style="left:467.90px;top:816.03px;width:4.6px;height:13.3px;background:#5cdd8b"></i><i style="left:475.90px;top:816.03px;width:4.6px;height:13.3px;background:#5cdd8b"></i><i style="left:483.90px;top:816.03px;width:4.6px;height:13.3px;background:#5cdd8b"></i><i style="left:491.90px;top:816.03px;width:4.6px;height:13.3px;background:#5cdd8b"></i><i style="left:499.90px;top:816.03px;width:4.6px;height:13.3px;background:#5cdd8b"></i><i style="left:507.90px;top:816.03px;width:4.6px;height:13.3px;background:#5cdd8b"></i><i style="left:515.90px;top:816.03px;width:4.6px;height:13.3px;background:#5cdd8b"></i><i style="left:523.90px;top:816.03px;width:4.6px;height:13.3px;background:#5cdd8b"></i><i style="left:531.90px;top:816.03px;width:4.6px;height:13.3px;background:#5cdd8b"></i><i style="left:539.90px;top:816.03px;width:4.6px;height:13.3px;background:#5cdd8b"></i><i style="left:547.90px;top:816.03px;width:4.6px;height:13.3px;background:#5cdd8b"></i><i style="left:555.90px;top:816.03px;width:4.6px;height:13.3px;background:#5cdd8b"></i><i style="left:563.90px;top:816.03px;width:4.6px;height:13.3px;background:#5cdd8b"></i><i style="left:571.90px;top:816.03px;width:4.6px;height:13.3px;background:#5cdd8b"></i><i style="left:579.90px;top:816.03px;width:4.6px;height:13.3px;background:#5cdd8b"></i><i style="left:587.90px;top:816.03px;width:4.6px;height:13.3px;background:#5cdd8b"></i><i style="left:595.90px;top:816.03px;width:4.6px;height:13.3px;background:#5cdd8b"></i></div>
</div>
<div>
<div class="pill" style="left:68px;top:859.87px;width:50px;height:16px;background:#5cdd8b"></div>
<div class="t" style="left:68px;top:862.27px;width:50px;text-align:center;font-size:10.5px;letter-spacing:-0.6px;font-weight:bold;color:#020b05">99.86%</div>
<div class="t" style="left:121px;top:861.57px;font-size:12px;letter-spacing:-0.5px;word-spacing:1.6px;color:#b1b8c0">24 WOTO PPPOE</div>
<div class="bt a" style="left:441px;top:0;width:200px;height:933px;overflow:hidden"><div class="a" style="left:-441px;top:0"><i style="left:439.10px;top:861.72px;width:4.9px;height:13.3px;background:#5cdd8b"></i><i style="left:447.10px;top:861.72px;width:4.9px;height:13.3px;background:#5cdd8b"></i><i style="left:455.10px;top:861.72px;width:4.9px;height:13.3px;background:#5cdd8b"></i><i style="left:463.10px;top:861.72px;width:4.9px;height:13.3px;background:#5cdd8b"></i><i style="left:471.10px;top:861.72px;width:4.9px;height:13.3px;background:#5cdd8b"></i><i style="left:479.10px;top:861.72px;width:4.9px;height:13.3px;background:#5cdd8b"></i><i style="left:487.10px;top:861.72px;width:4.9px;height:13.3px;background:#5cdd8b"></i><i style="left:495.10px;top:861.72px;width:4.9px;height:13.3px;background:#5cdd8b"></i><i style="left:503.10px;top:861.72px;width:4.9px;height:13.3px;background:#5cdd8b"></i><i style="left:511.10px;top:861.72px;width:4.9px;height:13.3px;background:#5cdd8b"></i><i style="left:519.10px;top:861.72px;width:4.9px;height:13.3px;background:#5cdd8b"></i><i style="left:527.10px;top:861.72px;width:4.9px;height:13.3px;background:#5cdd8b"></i><i style="left:535.10px;top:861.72px;width:4.9px;height:13.3px;background:#5cdd8b"></i><i style="left:543.10px;top:861.72px;width:4.9px;height:13.3px;background:#5cdd8b"></i><i style="left:551.10px;top:861.72px;width:4.9px;height:13.3px;background:#5cdd8b"></i><i style="left:559.10px;top:861.72px;width:4.9px;height:13.3px;background:#5cdd8b"></i><i style="left:567.10px;top:861.72px;width:4.9px;height:13.3px;background:#5cdd8b"></i><i style="left:575.10px;top:861.72px;width:4.9px;height:13.3px;background:#5cdd8b"></i><i style="left:583.10px;top:861.72px;width:4.9px;height:13.3px;background:#5cdd8b"></i><i style="left:591.10px;top:861.72px;width:4.9px;height:13.3px;background:#5cdd8b"></i><i style="left:599.10px;top:861.72px;width:4.9px;height:13.3px;background:#5cdd8b"></i></div></div>
</div>
<div>
<div class="pill" style="left:68px;top:905.56px;width:50px;height:16px;background:#5cdd8b"></div>
<div class="t" style="left:68px;top:907.96px;width:50px;text-align:center;font-size:10.5px;letter-spacing:-0.6px;font-weight:bold;color:#020b05">100%</div>
<div class="t" style="left:121px;top:907.26px;font-size:12px;letter-spacing:-0.5px;word-spacing:1.6px;color:#b1b8c0">25 RIAN PPPOE</div>
<div class="bt"><i style="left:443.90px;top:907.41px;width:4.6px;height:13.3px;background:#5cdd8b"></i><i style="left:451.90px;top:907.41px;width:4.6px;height:13.3px;background:#5cdd8b"></i><i style="left:459.90px;top:907.41px;width:4.6px;height:13.3px;background:#5cdd8b"></i><i style="left:467.90px;top:907.41px;width:4.6px;height:13.3px;background:#5cdd8b"></i><i style="left:475.90px;top:907.41px;width:4.6px;height:13.3px;background:#5cdd8b"></i><i style="left:483.90px;top:907.41px;width:4.6px;height:13.3px;background:#5cdd8b"></i><i style="left:491.90px;top:907.41px;width:4.6px;height:13.3px;background:#5cdd8b"></i><i style="left:499.90px;top:907.41px;width:4.6px;height:13.3px;background:#5cdd8b"></i><i style="left:507.90px;top:907.41px;width:4.6px;height:13.3px;background:#5cdd8b"></i><i style="left:515.90px;top:907.41px;width:4.6px;height:13.3px;background:#5cdd8b"></i><i style="left:523.90px;top:907.41px;width:4.6px;height:13.3px;background:#5cdd8b"></i><i style="left:531.90px;top:907.41px;width:4.6px;height:13.3px;background:#5cdd8b"></i><i style="left:539.90px;top:907.41px;width:4.6px;height:13.3px;background:#5cdd8b"></i><i style="left:547.90px;top:907.41px;width:4.6px;height:13.3px;background:#5cdd8b"></i><i style="left:555.90px;top:907.41px;width:4.6px;height:13.3px;background:#5cdd8b"></i><i style="left:563.90px;top:907.41px;width:4.6px;height:13.3px;background:#5cdd8b"></i><i style="left:571.90px;top:907.41px;width:4.6px;height:13.3px;background:#5cdd8b"></i><i style="left:579.90px;top:907.41px;width:4.6px;height:13.3px;background:#5cdd8b"></i><i style="left:587.90px;top:907.41px;width:4.6px;height:13.3px;background:#5cdd8b"></i><i style="left:595.90px;top:907.41px;width:4.6px;height:13.3px;background:#5cdd8b"></i></div>
</div>
<div class="t" style="left:653px;top:74px;font-size:25px;letter-spacing:-0.3px;-webkit-text-stroke:0.5px #b1b8c0;color:#b1b8c0">MONITOR SRV</div>
<div class="a" style="left:653px;top:116px;width:321px;height:31px;background:#161b22;border-radius:16px;overflow:hidden"><div class="a" style="left:235px;top:0;width:86px;height:31px;background:#dc3545"></div></div>
<svg class="a" style="left:670px;top:127px" width="11" height="10" viewBox="0 0 11 10"><rect x="0" y="0" width="4" height="10" rx="0.6" fill="#b1b8c0"/><rect x="6.4" y="0" width="4" height="10" rx="0.6" fill="#b1b8c0"/></svg>
<div class="t" style="left:685.5px;top:127.2px;font-size:11.4px;color:#b1b8c0">Pause</div>
<svg class="a" style="left:750px;top:125px" width="16" height="14" viewBox="0 0 16 14"><path d="M7.3 3.2H1.7V12.3H10.7V8.6" fill="none" stroke="#b1b8c0" stroke-width="1.3"/><path d="M4.8 10.3L5.3 7.6L11.6 1.3L13.6 3.3L7.3 9.6Z" fill="#b1b8c0"/><path d="M12.2 0.7L12.9 0L14.9 2L14.2 2.7Z" fill="#b1b8c0"/></svg>
<div class="t" style="left:769.3px;top:127px;font-size:11.9px;letter-spacing:0.1px;color:#b1b8c0">Edit</div>
<svg class="a" style="left:822px;top:126px" width="13" height="12" viewBox="0 0 13 12"><rect x="3.5" y="0" width="9" height="9" rx="1" fill="#b1b8c0"/><path d="M2 3V10.5H10" fill="none" stroke="#b1b8c0" stroke-width="1.8"/></svg>
<div class="t" style="left:840px;top:127px;font-size:12px;letter-spacing:0.1px;color:#b1b8c0">Clone</div>
<svg class="a" style="left:905px;top:126px" width="12" height="12" viewBox="0 0 12 13"><rect x="0" y="1" width="12" height="2" rx="0.5" fill="#fff"/><rect x="4" y="0" width="4" height="2" fill="#fff"/><path d="M1 4H11L10 13H2Z" fill="#fff"/></svg>
<div class="t" style="left:920px;top:127px;font-size:12.2px;letter-spacing:0.1px;color:#fff">Delete</div>
<div class="a" style="left:653px;top:166px;width:1250px;height:113px;background:#0d1117;border-radius:10px"></div>
<div class="bt"><i style="left:674.00px;top:191.80px;width:8.4px;height:24px;background:#5cdd8b"></i><i style="left:688.00px;top:191.80px;width:8.4px;height:24px;background:#5cdd8b"></i><i style="left:702.00px;top:191.80px;width:8.4px;height:24px;background:#5cdd8b"></i><i style="left:716.00px;top:191.80px;width:8.4px;height:24px;background:#5cdd8b"></i><i style="left:730.00px;top:191.80px;width:8.4px;height:24px;background:#5cdd8b"></i><i style="left:744.00px;top:191.80px;width:8.4px;height:24px;background:#5cdd8b"></i><i style="left:758.00px;top:191.80px;width:8.4px;height:24px;background:#5cdd8b"></i><i style="left:772.00px;top:191.80px;width:8.4px;height:24px;background:#5cdd8b"></i><i style="left:786.00px;top:191.80px;width:8.4px;height:24px;background:#5cdd8b"></i><i style="left:800.00px;top:191.80px;width:8.4px;height:24px;background:#5cdd8b"></i><i style="left:814.00px;top:191.80px;width:8.4px;height:24px;background:#5cdd8b"></i><i style="left:828.00px;top:191.80px;width:8.4px;height:24px;background:#5cdd8b"></i><i style="left:842.00px;top:191.80px;width:8.4px;height:24px;background:#5cdd8b"></i><i style="left:856.00px;top:191.80px;width:8.4px;height:24px;background:#5cdd8b"></i><i style="left:870.00px;top:191.80px;width:8.4px;height:24px;background:#5cdd8b"></i><i style="left:884.00px;top:191.80px;width:8.4px;height:24px;background:#5cdd8b"></i><i style="left:898.00px;top:191.80px;width:8.4px;height:24px;background:#5cdd8b"></i><i style="left:912.00px;top:191.80px;width:8.4px;height:24px;background:#5cdd8b"></i><i style="left:926.00px;top:191.80px;width:8.4px;height:24px;background:#5cdd8b"></i><i style="left:940.00px;top:191.80px;width:8.4px;height:24px;background:#5cdd8b"></i><i style="left:954.00px;top:191.80px;width:8.4px;height:24px;background:#5cdd8b"></i><i style="left:968.00px;top:191.80px;width:8.4px;height:24px;background:#5cdd8b"></i><i style="left:982.00px;top:191.80px;width:8.4px;height:24px;background:#5cdd8b"></i><i style="left:996.00px;top:191.80px;width:8.4px;height:24px;background:#5cdd8b"></i><i style="left:1010.00px;top:191.80px;width:8.4px;height:24px;background:#5cdd8b"></i><i style="left:1024.00px;top:191.80px;width:8.4px;height:24px;background:#5cdd8b"></i><i style="left:1038.00px;top:191.80px;width:8.4px;height:24px;background:#5cdd8b"></i><i style="left:1052.00px;top:191.80px;width:8.4px;height:24px;background:#5cdd8b"></i><i style="left:1066.00px;top:191.80px;width:8.4px;height:24px;background:#5cdd8b"></i><i style="left:1080.00px;top:191.80px;width:8.4px;height:24px;background:#5cdd8b"></i><i style="left:1094.00px;top:191.80px;width:8.4px;height:24px;background:#5cdd8b"></i><i style="left:1108.00px;top:191.80px;width:8.4px;height:24px;background:#5cdd8b"></i><i style="left:1122.00px;top:191.80px;width:8.4px;height:24px;background:#5cdd8b"></i><i style="left:1136.00px;top:191.80px;width:8.4px;height:24px;background:#5cdd8b"></i><i style="left:1150.00px;top:191.80px;width:8.4px;height:24px;background:#5cdd8b"></i><i style="left:1164.00px;top:191.80px;width:8.4px;height:24px;background:#5cdd8b"></i><i style="left:1178.00px;top:191.80px;width:8.4px;height:24px;background:#5cdd8b"></i><i style="left:1192.00px;top:191.80px;width:8.4px;height:24px;background:#5cdd8b"></i><i style="left:1206.00px;top:191.80px;width:8.4px;height:24px;background:#5cdd8b"></i><i style="left:1220.00px;top:191.80px;width:8.4px;height:24px;background:#5cdd8b"></i><i style="left:1234.00px;top:191.80px;width:8.4px;height:24px;background:#5cdd8b"></i><i style="left:1248.00px;top:191.80px;width:8.4px;height:24px;background:#5cdd8b"></i><i style="left:1262.00px;top:191.80px;width:8.4px;height:24px;background:#5cdd8b"></i><i style="left:1276.00px;top:191.80px;width:8.4px;height:24px;background:#5cdd8b"></i><i style="left:1290.00px;top:191.80px;width:8.4px;height:24px;background:#5cdd8b"></i><i style="left:1304.00px;top:191.80px;width:8.4px;height:24px;background:#5cdd8b"></i><i style="left:1318.00px;top:191.80px;width:8.4px;height:24px;background:#5cdd8b"></i><i style="left:1332.00px;top:191.80px;width:8.4px;height:24px;background:#5cdd8b"></i><i style="left:1346.00px;top:191.80px;width:8.4px;height:24px;background:#5cdd8b"></i><i style="left:1360.00px;top:191.80px;width:8.4px;height:24px;background:#5cdd8b"></i><i style="left:1374.00px;top:191.80px;width:8.4px;height:24px;background:#5cdd8b"></i><i style="left:1388.00px;top:191.80px;width:8.4px;height:24px;background:#5cdd8b"></i><i style="left:1402.00px;top:191.80px;width:8.4px;height:24px;background:#5cdd8b"></i><i style="left:1416.00px;top:191.80px;width:8.4px;height:24px;background:#5cdd8b"></i><i style="left:1430.00px;top:191.80px;width:8.4px;height:24px;background:#5cdd8b"></i><i style="left:1444.00px;top:191.80px;width:8.4px;height:24px;background:#5cdd8b"></i></div>
<div class="t" style="left:671px;top:226px;font-size:9.5px;color:#b1b8c0">55m ago</div>
<div class="t" style="left:1441px;top:227px;font-size:9px;color:#b1b8c0">now</div>
<div class="t" style="left:669px;top:249px;font-size:10.7px;color:#b1b8c0">Check every 60 seconds</div>
<div class="pill" style="left:1642px;top:183px;width:64px;height:41px;background:#5cdd8b"></div>
<div class="t" style="left:1642px;top:195px;width:64px;text-align:center;font-size:23px;font-weight:bold;-webkit-text-stroke:0.6px #020b05;color:#020b05">Up</div>
<div class="a" style="left:653px;top:299px;width:1250px;height:119px;background:#0d1117;border-radius:10px"></div>
<div class="t" style="left:860px;top:326.5px;width:200px;text-align:center;font-size:19.6px;-webkit-text-stroke:0.7px #b1b8c0;color:#b1b8c0">Uptime</div>
<div class="t" style="left:860px;top:356.5px;width:200px;text-align:center;font-size:10.4px;color:#b1b8c0">(24-hour)</div>
<div class="t" style="left:860px;top:380px;width:200px;text-align:center;font-size:12px;color:#b1b8c0">99.93%</div>
<div class="t" style="left:1476px;top:326.5px;width:200px;text-align:center;font-size:19.6px;-webkit-text-stroke:0.7px #b1b8c0;color:#b1b8c0">Uptime</div>
<div class="t" style="left:1476px;top:356.5px;width:200px;text-align:center;font-size:10.4px;color:#b1b8c0">(30-day)</div>
<div class="t" style="left:1476px;top:380px;width:200px;text-align:center;font-size:12px;color:#b1b8c0">93.74%</div>
<div class="a" style="left:653px;top:438px;width:1250px;height:238px;background:#0d1117;border-radius:10px"></div>
<div class="t" style="left:1793.5px;top:460.4px;font-size:12px;letter-spacing:-0.6px;color:#8c9096">Recent</div>
<svg class="a" style="left:0;top:0" width="1834" height="933"><line x1="713" y1="632.5" x2="1834" y2="632.5" stroke="#202329" stroke-width="1"/><text x="710.5" y="634.6" text-anchor="end" font-size="9.3" fill="#74787e" font-family="Liberation Sans">0</text><line x1="713" y1="617.5" x2="1834" y2="617.5" stroke="#202329" stroke-width="1"/><text x="710.5" y="619.6" text-anchor="end" font-size="9.3" fill="#74787e" font-family="Liberation Sans">0.1</text><line x1="713" y1="603.5" x2="1834" y2="603.5" stroke="#202329" stroke-width="1"/><text x="710.5" y="605.6" text-anchor="end" font-size="9.3" fill="#74787e" font-family="Liberation Sans">0.2</text><line x1="713" y1="588.5" x2="1834" y2="588.5" stroke="#202329" stroke-width="1"/><text x="710.5" y="590.6" text-anchor="end" font-size="9.3" fill="#74787e" font-family="Liberation Sans">0.3</text><line x1="713" y1="574.5" x2="1834" y2="574.5" stroke="#202329" stroke-width="1"/><text x="710.5" y="576.6" text-anchor="end" font-size="9.3" fill="#74787e" font-family="Liberation Sans">0.4</text><line x1="713" y1="559.5" x2="1834" y2="559.5" stroke="#202329" stroke-width="1"/><text x="710.5" y="561.6" text-anchor="end" font-size="9.3" fill="#74787e" font-family="Liberation Sans">0.5</text><line x1="713" y1="545.5" x2="1834" y2="545.5" stroke="#202329" stroke-width="1"/><text x="710.5" y="547.6" text-anchor="end" font-size="9.3" fill="#74787e" font-family="Liberation Sans">0.6</text><line x1="713" y1="530.5" x2="1834" y2="530.5" stroke="#202329" stroke-width="1"/><text x="710.5" y="532.6" text-anchor="end" font-size="9.3" fill="#74787e" font-family="Liberation Sans">0.7</text><line x1="713" y1="516.5" x2="1834" y2="516.5" stroke="#202329" stroke-width="1"/><text x="710.5" y="518.6" text-anchor="end" font-size="9.3" fill="#74787e" font-family="Liberation Sans">0.8</text><line x1="713" y1="501.5" x2="1834" y2="501.5" stroke="#202329" stroke-width="1"/><text x="710.5" y="503.6" text-anchor="end" font-size="9.3" fill="#74787e" font-family="Liberation Sans">0.9</text><line x1="713" y1="487.5" x2="1834" y2="487.5" stroke="#202329" stroke-width="1"/><text x="710.5" y="489.6" text-anchor="end" font-size="9.3" fill="#74787e" font-family="Liberation Sans">1.0</text><line x1="733.5" y1="487" x2="733.5" y2="638" stroke="#202329" stroke-width="1"/><text x="733.8" y="649" text-anchor="middle" font-size="9.3" fill="#74787e" font-family="Liberation Sans">17:49</text><line x1="789.5" y1="487" x2="789.5" y2="638" stroke="#202329" stroke-width="1"/><text x="789.4" y="649" text-anchor="middle" font-size="9.3" fill="#74787e" font-family="Liberation Sans">17:54</text><line x1="844.5" y1="487" x2="844.5" y2="638" stroke="#202329" stroke-width="1"/><text x="845.0" y="649" text-anchor="middle" font-size="9.3" fill="#74787e" font-family="Liberation Sans">17:59</text><line x1="900.5" y1="487" x2="900.5" y2="638" stroke="#202329" stroke-width="1"/><text x="900.6" y="649" text-anchor="middle" font-size="9.3" fill="#74787e" font-family="Liberation Sans">18:04</text><line x1="955.5" y1="487" x2="955.5" y2="638" stroke="#202329" stroke-width="1"/><text x="956.2" y="649" text-anchor="middle" font-size="9.3" fill="#74787e" font-family="Liberation Sans">18:09</text><line x1="1011.5" y1="487" x2="1011.5" y2="638" stroke="#202329" stroke-width="1"/><text x="1011.8" y="649" text-anchor="middle" font-size="9.3" fill="#74787e" font-family="Liberation Sans">18:14</text><line x1="1067.5" y1="487" x2="1067.5" y2="638" stroke="#202329" stroke-width="1"/><text x="1067.4" y="649" text-anchor="middle" font-size="9.3" fill="#74787e" font-family="Liberation Sans">18:19</text><line x1="1122.5" y1="487" x2="1122.5" y2="638" stroke="#202329" stroke-width="1"/><text x="1123.0" y="649" text-anchor="middle" font-size="9.3" fill="#74787e" font-family="Liberation Sans">18:24</text><line x1="1178.5" y1="487" x2="1178.5" y2="638" stroke="#202329" stroke-width="1"/><text x="1178.6" y="649" text-anchor="middle" font-size="9.3" fill="#74787e" font-family="Liberation Sans">18:29</text><line x1="1234.5" y1="487" x2="1234.5" y2="638" stroke="#202329" stroke-width="1"/><text x="1234.2" y="649" text-anchor="middle" font-size="9.3" fill="#74787e" font-family="Liberation Sans">18:34</text><line x1="1289.5" y1="487" x2="1289.5" y2="638" stroke="#202329" stroke-width="1"/><text x="1289.8" y="649" text-anchor="middle" font-size="9.3" fill="#74787e" font-family="Liberation Sans">18:39</text><line x1="1345.5" y1="487" x2="1345.5" y2="638" stroke="#202329" stroke-width="1"/><text x="1345.4" y="649" text-anchor="middle" font-size="9.3" fill="#74787e" font-family="Liberation Sans">18:44</text><line x1="1400.5" y1="487" x2="1400.5" y2="638" stroke="#202329" stroke-width="1"/><text x="1401.0" y="649" text-anchor="middle" font-size="9.3" fill="#74787e" font-family="Liberation Sans">18:49</text><line x1="1456.5" y1="487" x2="1456.5" y2="638" stroke="#202329" stroke-width="1"/><text x="1456.6" y="649" text-anchor="middle" font-size="9.3" fill="#74787e" font-family="Liberation Sans">18:54</text><line x1="1511.5" y1="487" x2="1511.5" y2="638" stroke="#202329" stroke-width="1"/><text x="1512.2" y="649" text-anchor="middle" font-size="9.3" fill="#74787e" font-family="Liberation Sans">18:59</text><line x1="1567.5" y1="487" x2="1567.5" y2="638" stroke="#202329" stroke-width="1"/><text x="1567.8" y="649" text-anchor="middle" font-size="9.3" fill="#74787e" font-family="Liberation Sans">19:04</text><line x1="1623.5" y1="487" x2="1623.5" y2="638" stroke="#202329" stroke-width="1"/><text x="1623.4" y="649" text-anchor="middle" font-size="9.3" fill="#74787e" font-family="Liberation Sans">19:09</text><line x1="1678.5" y1="487" x2="1678.5" y2="638" stroke="#202329" stroke-width="1"/><text x="1679.0" y="649" text-anchor="middle" font-size="9.3" fill="#74787e" font-family="Liberation Sans">19:14</text><line x1="1734.5" y1="487" x2="1734.5" y2="638" stroke="#202329" stroke-width="1"/><text x="1734.6" y="649" text-anchor="middle" font-size="9.3" fill="#74787e" font-family="Liberation Sans">19:19</text><line x1="1790.5" y1="487" x2="1790.5" y2="638" stroke="#202329" stroke-width="1"/><text x="1790.2" y="649" text-anchor="middle" font-size="9.3" fill="#74787e" font-family="Liberation Sans">19:24</text><text x="0" y="0" transform="translate(688.6,559.5) rotate(-90)" text-anchor="middle" font-size="9.3" fill="#74787e" font-family="Liberation Sans">Resp. Time ( ms)</text></svg>
<div class="a" style="left:653px;top:696px;width:1250px;height:300px;background:#0d1117;border-radius:10px"></div>
<div class="pill" style="left:1760px;top:712px;width:100px;height:25px;border:1px solid #dc3545"></div>
<svg class="a" style="left:1777px;top:718px" width="10" height="12" viewBox="0 0 12 13"><rect x="0" y="1" width="12" height="2" rx="0.5" fill="#dc3545"/><rect x="4" y="0" width="4" height="2" fill="#dc3545"/><path d="M1 4H11L10 13H2Z" fill="#dc3545"/></svg>
<div class="t" style="left:1790px;top:719px;font-size:10.6px;color:#dc3545">Clear Data</div>
<div class="t" style="left:676px;top:747px;font-size:10.8px;font-weight:bold;color:#b1b8c0">Status</div>
<div class="t" style="left:911px;top:747px;font-size:10.8px;font-weight:bold;color:#b1b8c0">DateTime</div>
<div class="t" style="left:1331px;top:747px;font-size:10.8px;font-weight:bold;color:#b1b8c0">Message</div>
<div class="pill" style="left:676px;top:775.0px;width:51px;height:15px;background:#5cdd8b"></div>
<div class="t" style="left:676px;top:778.5px;width:51px;text-align:center;font-size:8.7px;font-weight:bold;-webkit-text-stroke:0.2px #020b05;color:#020b05">Up</div>
<div class="t" style="left:911px;top:775.5px;font-size:10.9px;color:#b1b8c0">2025-05-25 16:49:13</div>
<div class="t" style="left:1331px;top:775.5px;font-size:11.3px;color:#b1b8c0">All children up and running</div>
<div class="pill" style="left:676px;top:805.0px;width:51px;height:15px;background:#dc3545"></div>
<div class="t" style="left:676px;top:808.5px;width:51px;text-align:center;font-size:8.7px;font-weight:bold;-webkit-text-stroke:0.2px #fff;color:#fff">Down</div>
<div class="t" style="left:911px;top:805.5px;font-size:10.9px;color:#b1b8c0">2025-05-25 16:48:13</div>
<div class="t" style="left:1331px;top:805.5px;font-size:11.3px;color:#b1b8c0">Child inaccessible</div>
<div class="pill" style="left:676px;top:835.0px;width:51px;height:15px;background:#5cdd8b"></div>
<div class="t" style="left:676px;top:838.5px;width:51px;text-align:center;font-size:8.7px;font-weight:bold;-webkit-text-stroke:0.2px #020b05;color:#020b05">Up</div>
<div class="t" style="left:911px;top:835.5px;font-size:10.9px;color:#b1b8c0">2025-05-23 15:17:44</div>
<div class="t" style="left:1331px;top:835.5px;font-size:11.3px;color:#b1b8c0">All children up and running</div>
<div class="pill" style="left:676px;top:864.0px;width:51px;height:15px;background:#dc3545"></div>
<div class="t" style="left:676px;top:867.5px;width:51px;text-align:center;font-size:8.7px;font-weight:bold;-webkit-text-stroke:0.2px #fff;color:#fff">Down</div>
<div class="t" style="left:911px;top:864.5px;font-size:10.9px;color:#b1b8c0">2025-05-23 15:13:44</div>
<div class="t" style="left:1331px;top:864.5px;font-size:11.3px;color:#b1b8c0">Child inaccessible</div>
<div class="pill" style="left:676px;top:894.0px;width:51px;height:15px;background:#5cdd8b"></div>
<div class="t" style="left:676px;top:897.5px;width:51px;text-align:center;font-size:8.7px;font-weight:bold;-webkit-text-stroke:0.2px #020b05;color:#020b05">Up</div>
<div class="t" style="left:911px;top:894.5px;font-size:10.9px;color:#b1b8c0">2025-05-23 14:32:43</div>
<div class="t" style="left:1331px;top:894.5px;font-size:11.3px;color:#b1b8c0">All children up and running</div>
<div class="pill" style="left:676px;top:923.0px;width:51px;height:15px;background:#dc3545"></div>
<div class="t" style="left:676px;top:926.5px;width:51px;text-align:center;font-size:8.7px;font-weight:bold;-webkit-text-stroke:0.2px #fff;color:#fff">Down</div>
<div class="t" style="left:911px;top:923.5px;font-size:10.9px;color:#b1b8c0">2025-05-23 14:31:43</div>
<div class="t" style="left:1331px;top:923.5px;font-size:11.3px;color:#b1b8c0">Child inaccessible</div>
</body></html>
